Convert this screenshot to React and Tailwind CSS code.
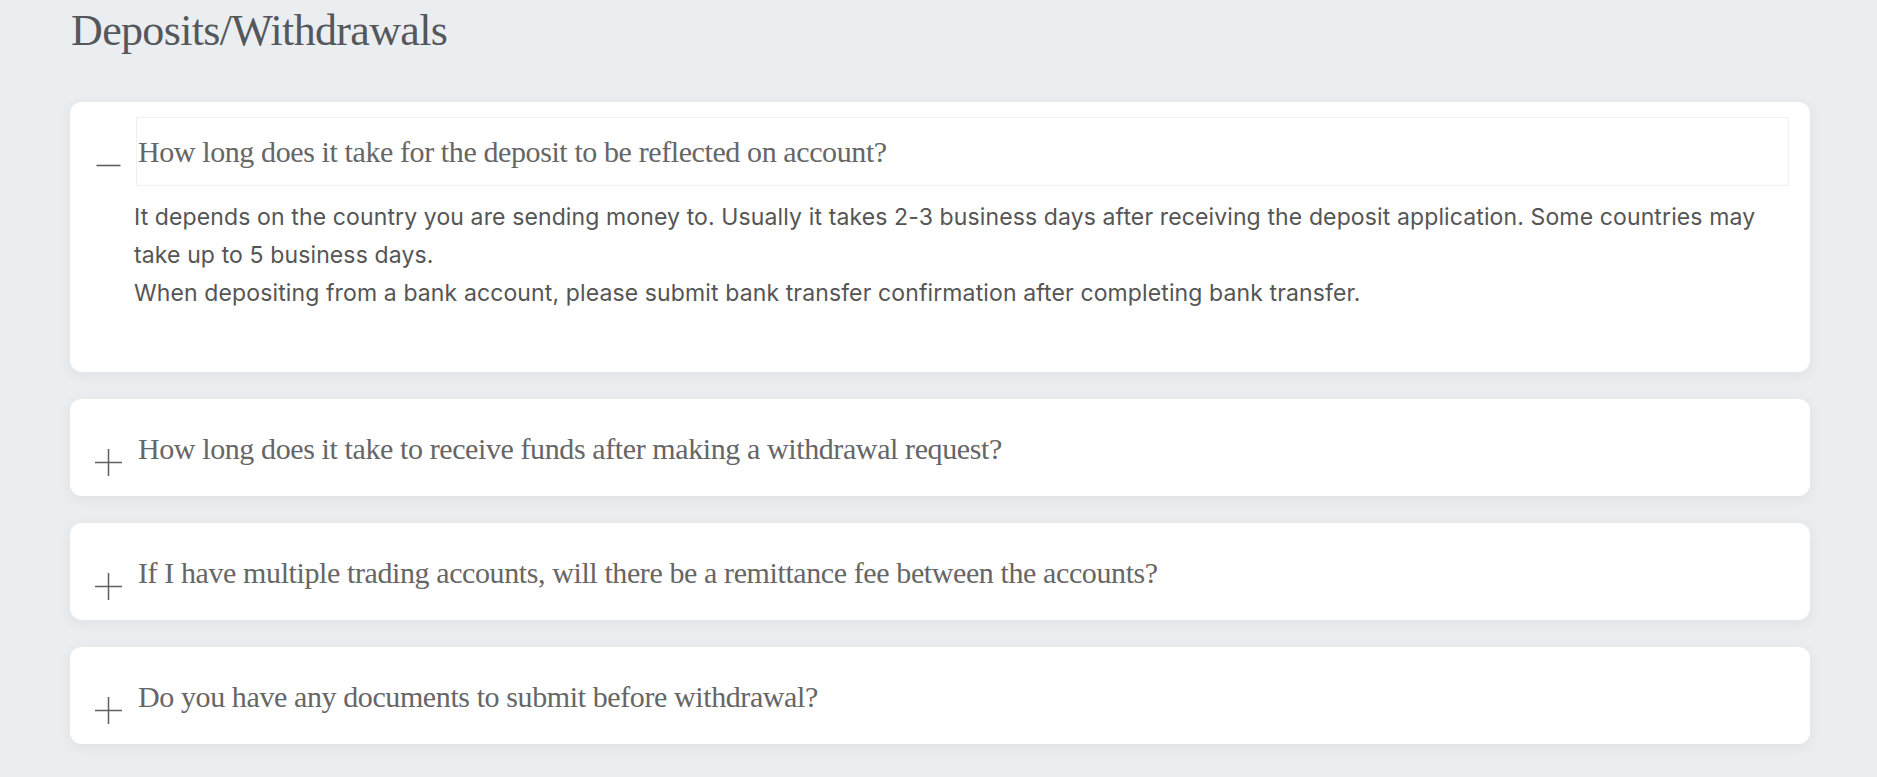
import React from "react";

const serif = { fontFamily: '"Liberation Serif", "Times New Roman", serif' };
const sans = { fontFamily: 'Inter, "Noto Sans", Roboto, sans-serif' };

function Icon({ open }) {
  return (
    <svg width="27" height="27" viewBox="0 0 27 27" className="block">
      {open ? (
        <line x1="1.5" y1="13.5" x2="25.5" y2="13.5" stroke="#5e5e5e" strokeWidth="1.6" />
      ) : (
        <>
          <line x1="0" y1="13.5" x2="27" y2="13.5" stroke="#5e5e5e" strokeWidth="1.5" />
          <line x1="13.5" y1="0" x2="13.5" y2="27" stroke="#5e5e5e" strokeWidth="1.5" />
        </>
      )}
    </svg>
  );
}

function Item({ q, open }) {
  return (
    <div className="rounded-[12px] bg-white pl-[25px] pr-[21px] pt-[15px] pb-[13px] shadow-[0_3px_14px_rgba(40,50,60,0.07)]">
      <div className="flex items-start">
        <div className="mt-[35px] shrink-0">
          <Icon open={open} />
        </div>
        <div
          className={`ml-[14px] flex-1 h-[69px] border pl-[1px] text-[30px] leading-[67px] tracking-[-0.4px] text-[#666666] whitespace-nowrap ${
            open ? "border-[#f1f1f1]" : "border-transparent"
          }`}
          style={serif}
        >
          {q}
        </div>
      </div>
      {open && (
        <div className="pl-[39px] pt-[12px] pb-[47px] text-[23px] leading-[38px] tracking-[0.12px] text-[#555555]" style={sans}>
          It depends on the country you are sending money to. Usually it takes 2-3 business days after receiving the deposit application. Some countries may take up to 5 business days.
          <br />
          When depositing from a bank account, please submit bank transfer confirmation after completing bank transfer.
        </div>
      )}
    </div>
  );
}

export default function App() {
  return (
    <div className="min-h-screen bg-[#ebeef1] pl-[70px] pr-[67px] pt-[4px] pb-[40px]">
      <h1
        className="pl-[1px] text-[44px] leading-[53px] tracking-[-0.65px] text-[#55585a] font-normal"
        style={serif}
      >
        Deposits/Withdrawals
      </h1>
      <div className="mt-[45px] flex flex-col gap-[27px]">
        <Item q="How long does it take for the deposit to be reflected on account?" open />
        <Item q="How long does it take to receive funds after making a withdrawal request?" />
        <Item q="If I have multiple trading accounts, will there be a remittance fee between the accounts?" />
        <Item q="Do you have any documents to submit before withdrawal?" />
      </div>
    </div>
  );
}
